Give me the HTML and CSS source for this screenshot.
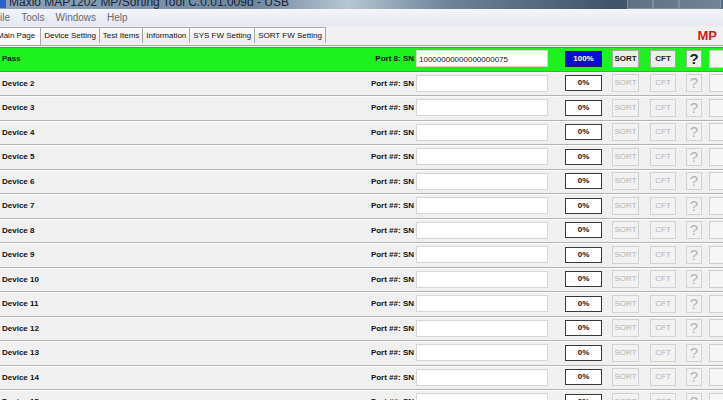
FILE: index.html
```html
<!DOCTYPE html>
<html lang="en">

<head>
  <meta charset="UTF-8" />
  <title>Maxio MAP1202 MP/Sorting Tool</title>
  <link rel="stylesheet" href="styles.css">
</head>

<body>
  <div class="titlebar">
    <span class="app-icon"></span>
    <span class="title">Maxio MAP1202 MP/Sorting Tool C.0.01.009d - USB</span>
    <div class="win-btns"><span></span><span></span><span class="close"></span></div>
  </div>

  <div class="menubar">
    <span>File</span>
    <span>Tools</span>
    <span>Windows</span>
    <span>Help</span>
  </div>

  <div class="tabbar">
    <div class="tabs">
      <div class="tab active">Main Page</div>
      <div class="tab">Device Setting</div>
      <div class="tab">Test Items</div>
      <div class="tab">Information</div>
      <div class="tab">SYS FW Setting</div>
      <div class="tab">SORT FW Setting</div>
    </div>
    <div class="mode">MP</div>
  </div>

  <div class="devices">
    <div class="row pass">
      <div class="name">Pass</div>
      <div class="port">Port 8: SN</div>
      <div class="sn">10000000000000000075</div>
      <div class="pct full">100%</div>
      <div class="btn sort">SORT</div>
      <div class="btn cft">CFT</div>
      <div class="btn help">?</div>
      <div class="extra"></div>
    </div>
    <div class="row">
      <div class="name">Device 2</div>
      <div class="port">Port ##: SN</div>
      <div class="sn"></div>
      <div class="pct">0%</div>
      <div class="btn sort">SORT</div>
      <div class="btn cft">CFT</div>
      <div class="btn help">?</div>
      <div class="extra"></div>
    </div>
    <div class="row">
      <div class="name">Device 3</div>
      <div class="port">Port ##: SN</div>
      <div class="sn"></div>
      <div class="pct">0%</div>
      <div class="btn sort">SORT</div>
      <div class="btn cft">CFT</div>
      <div class="btn help">?</div>
      <div class="extra"></div>
    </div>
    <div class="row">
      <div class="name">Device 4</div>
      <div class="port">Port ##: SN</div>
      <div class="sn"></div>
      <div class="pct">0%</div>
      <div class="btn sort">SORT</div>
      <div class="btn cft">CFT</div>
      <div class="btn help">?</div>
      <div class="extra"></div>
    </div>
    <div class="row">
      <div class="name">Device 5</div>
      <div class="port">Port ##: SN</div>
      <div class="sn"></div>
      <div class="pct">0%</div>
      <div class="btn sort">SORT</div>
      <div class="btn cft">CFT</div>
      <div class="btn help">?</div>
      <div class="extra"></div>
    </div>
    <div class="row">
      <div class="name">Device 6</div>
      <div class="port">Port ##: SN</div>
      <div class="sn"></div>
      <div class="pct">0%</div>
      <div class="btn sort">SORT</div>
      <div class="btn cft">CFT</div>
      <div class="btn help">?</div>
      <div class="extra"></div>
    </div>
    <div class="row">
      <div class="name">Device 7</div>
      <div class="port">Port ##: SN</div>
      <div class="sn"></div>
      <div class="pct">0%</div>
      <div class="btn sort">SORT</div>
      <div class="btn cft">CFT</div>
      <div class="btn help">?</div>
      <div class="extra"></div>
    </div>
    <div class="row">
      <div class="name">Device 8</div>
      <div class="port">Port ##: SN</div>
      <div class="sn"></div>
      <div class="pct">0%</div>
      <div class="btn sort">SORT</div>
      <div class="btn cft">CFT</div>
      <div class="btn help">?</div>
      <div class="extra"></div>
    </div>
    <div class="row">
      <div class="name">Device 9</div>
      <div class="port">Port ##: SN</div>
      <div class="sn"></div>
      <div class="pct">0%</div>
      <div class="btn sort">SORT</div>
      <div class="btn cft">CFT</div>
      <div class="btn help">?</div>
      <div class="extra"></div>
    </div>
    <div class="row">
      <div class="name">Device 10</div>
      <div class="port">Port ##: SN</div>
      <div class="sn"></div>
      <div class="pct">0%</div>
      <div class="btn sort">SORT</div>
      <div class="btn cft">CFT</div>
      <div class="btn help">?</div>
      <div class="extra"></div>
    </div>
    <div class="row">
      <div class="name">Device 11</div>
      <div class="port">Port ##: SN</div>
      <div class="sn"></div>
      <div class="pct">0%</div>
      <div class="btn sort">SORT</div>
      <div class="btn cft">CFT</div>
      <div class="btn help">?</div>
      <div class="extra"></div>
    </div>
    <div class="row">
      <div class="name">Device 12</div>
      <div class="port">Port ##: SN</div>
      <div class="sn"></div>
      <div class="pct">0%</div>
      <div class="btn sort">SORT</div>
      <div class="btn cft">CFT</div>
      <div class="btn help">?</div>
      <div class="extra"></div>
    </div>
    <div class="row">
      <div class="name">Device 13</div>
      <div class="port">Port ##: SN</div>
      <div class="sn"></div>
      <div class="pct">0%</div>
      <div class="btn sort">SORT</div>
      <div class="btn cft">CFT</div>
      <div class="btn help">?</div>
      <div class="extra"></div>
    </div>
    <div class="row">
      <div class="name">Device 14</div>
      <div class="port">Port ##: SN</div>
      <div class="sn"></div>
      <div class="pct">0%</div>
      <div class="btn sort">SORT</div>
      <div class="btn cft">CFT</div>
      <div class="btn help">?</div>
      <div class="extra"></div>
    </div>
    <div class="row">
      <div class="name">Device 15</div>
      <div class="port">Port ##: SN</div>
      <div class="sn"></div>
      <div class="pct">0%</div>
      <div class="btn sort">SORT</div>
      <div class="btn cft">CFT</div>
      <div class="btn help">?</div>
      <div class="extra"></div>
    </div>
  </div>
</body>

</html>
```

FILE: styles.css
```css
body {
  margin: 0;
  padding: 0;
  width: 723px;
  height: 400px;
  overflow: hidden;
  background-color: #f0f0f0;
  font-family: 'Liberation Sans', Arial, sans-serif;
  color: #111;
}

.titlebar {
  display: flex;
  align-items: flex-start;
  height: 9px;
  overflow: hidden;
  background: linear-gradient(90deg, #8ea3b8 0%, #6f869d 35%, #b7c6d4 48%, #6d8399 62%, #3f5468 85%, #5a6f84 100%);
}

.app-icon {
  width: 6px;
  height: 8px;
  margin-right: 3px;
  background: #2a62c9;
}

.title {
  font-size: 12px;
  line-height: 12px;
  margin-top: -4px;
  color: #17243a;
  white-space: nowrap;
}

.win-btns {
  display: flex;
  margin-left: auto;
  margin-right: 2px;
  height: 9px;
}

.win-btns span {
  width: 24px;
  border: 1px solid #7e8fa0;
  border-top: none;
  background: rgba(255, 255, 255, 0.15);
}

.win-btns .close {
  width: 40px;
}

.menubar {
  display: flex;
  gap: 11px;
  height: 17px;
  align-items: center;
  margin-left: -6px;
  background: linear-gradient(180deg, #f3f5fa, #e4e8f1);
  font-size: 10px;
  color: #666a72;
}

.tabbar {
  display: flex;
  align-items: flex-end;
  height: 19px;
  background-color: #f0f0f0;
  border-bottom: 1px solid #a9a9a9;
}

.tabs {
  display: flex;
  margin-left: -9px;
}

.tab {
  height: 15px;
  line-height: 15px;
  padding: 0 3px;
  border: 1px solid #a8a8a8;
  border-bottom: none;
  margin-left: -1px;
  background: linear-gradient(180deg, #fbfbfb, #ececec);
  font-size: 8px;
  white-space: nowrap;
}

.tab.active {
  height: 17px;
  line-height: 16px;
  margin-left: 0;
  padding: 0 5px;
  background: #fff;
  position: relative;
  z-index: 1;
}

.mode {
  margin-left: auto;
  margin-right: 6px;
  width: 28px;
  text-align: right;
  font-size: 13px;
  font-weight: bold;
  color: #d11b1b;
  line-height: 16px;
  margin-bottom: 1px;
}

.devices {
  margin-top: 1px;
}

.row {
  display: flex;
  align-items: center;
  height: 24.5px;
  box-sizing: border-box;
  padding-left: 2px;
  background-color: #f0f0f0;
  border-bottom: 1px solid #b3b3b3;
  box-shadow: inset 0 1px 0 #fdfdfd;
  font-size: 8px;
}

.row.pass {
  background-color: #1ef21e;
  box-shadow: inset 0 1px 0 #12c812;
  border-bottom-color: #15c815;
}

.name {
  flex: 1;
  font-weight: bold;
}

.port {
  font-weight: bold;
  margin-right: 2px;
}

.sn {
  width: 132px;
  height: 17px;
  line-height: 17px;
  box-sizing: border-box;
  padding-left: 2px;
  background: #fff;
  border: 1px solid #d6d6d6;
  margin-right: 17px;
  font-size: 8px;
}

.pct {
  width: 37px;
  height: 16px;
  line-height: 14px;
  box-sizing: border-box;
  text-align: center;
  font-weight: bold;
  background: #fff;
  border: 1px solid #3a3a3a;
  margin-right: 10px;
}

.pct.full {
  background: #0b0bd6;
  color: #fff;
  border-color: #1a1a60;
}

.btn {
  height: 18px;
  line-height: 16px;
  box-sizing: border-box;
  text-align: center;
  background: #f2f2f2;
  border: 1px solid #d2d2d2;
  color: #b3b3b3;
}

.sort {
  width: 27px;
  margin-right: 11px;
}

.cft {
  width: 26px;
  margin-right: 10px;
}

.help {
  width: 16px;
  font-size: 15px;
  margin-right: 7px;
}

.pass .btn {
  background: #ececec;
  border-color: #a6a6a6;
  color: #222;
  font-weight: bold;
}

.extra {
  width: 14px;
  height: 18px;
  flex-shrink: 0;
  box-sizing: border-box;
  background: #f6f6f6;
  border: 1px solid #cfcfcf;
  border-right: none;
}
```
